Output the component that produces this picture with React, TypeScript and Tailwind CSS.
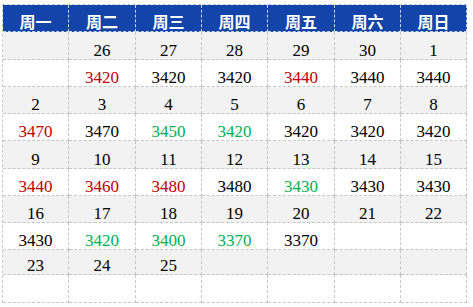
const RED = "text-[#c00000]";
const GREEN = "text-[#00b050]";
const BLACK = "text-black";

type Cell = { v: string; c?: string };

const headers = ["周一", "周二", "周三", "周四", "周五", "周六", "周日"];

const weeks: { dates: string[]; prices: Cell[] }[] = [
  {
    dates: ["", "26", "27", "28", "29", "30", "1"],
    prices: [
      { v: "" },
      { v: "3420", c: RED },
      { v: "3420" },
      { v: "3420" },
      { v: "3440", c: RED },
      { v: "3440" },
      { v: "3440" },
    ],
  },
  {
    dates: ["2", "3", "4", "5", "6", "7", "8"],
    prices: [
      { v: "3470", c: RED },
      { v: "3470" },
      { v: "3450", c: GREEN },
      { v: "3420", c: GREEN },
      { v: "3420" },
      { v: "3420" },
      { v: "3420" },
    ],
  },
  {
    dates: ["9", "10", "11", "12", "13", "14", "15"],
    prices: [
      { v: "3440", c: RED },
      { v: "3460", c: RED },
      { v: "3480", c: RED },
      { v: "3480" },
      { v: "3430", c: GREEN },
      { v: "3430" },
      { v: "3430" },
    ],
  },
  {
    dates: ["16", "17", "18", "19", "20", "21", "22"],
    prices: [
      { v: "3430" },
      { v: "3420", c: GREEN },
      { v: "3400", c: GREEN },
      { v: "3370", c: GREEN },
      { v: "3370" },
      { v: "" },
      { v: "" },
    ],
  },
  {
    dates: ["23", "24", "25", "", "", "", ""],
    prices: [{ v: "" }, { v: "" }, { v: "" }, { v: "" }, { v: "" }, { v: "" }, { v: "" }],
  },
];

// row heights (incl. bottom border) measured off the sheet
const dateH = ["h-[28px]", "h-[27px]", "h-[28px]", "h-[27px]", "h-[25px]"];
const priceH = ["h-[27px]", "h-[27px]", "h-[27px]", "h-[27px]", "h-[28px]"];

const cellBase =
  "flex items-end justify-center border-r border-b border-dashed border-[#c6c6c6] leading-[17px] text-[17px]";

export default function App() {
  return (
    <div className="w-[473px] h-[307px] bg-white pl-[2px] pt-[4px]">
      <div
        className="grid grid-cols-[66px_67px_66px_66px_67px_66px_66px] w-[465px] border-l border-t border-dashed border-[#c6c6c6]"
        style={{ fontFamily: '"Liberation Serif", "Noto Sans CJK SC", serif' }}
      >
        {headers.map((h) => (
          <div
            key={h}
            className="flex items-end justify-center h-[27px] bg-[#1244aa] border-r border-b border-dashed border-[#c9d3ea] text-white text-[16px] font-bold leading-[17px] pb-[1px]"
            style={{ fontFamily: '"Noto Sans CJK SC", sans-serif' }}
          >
            {h}
          </div>
        ))}
        {weeks.map((w, i) => (
          <div key={i} className="contents">
            {w.dates.map((d, j) => (
              <div key={"d" + j} className={`${cellBase} ${dateH[i]} bg-[#f2f2f2] text-black`}>
                {d}
              </div>
            ))}
            {w.prices.map((p, j) => (
              <div key={"p" + j} className={`${cellBase} ${priceH[i]} bg-white ${p.c ?? BLACK}`}>
                {p.v}
              </div>
            ))}
          </div>
        ))}
      </div>
    </div>
  );
}
